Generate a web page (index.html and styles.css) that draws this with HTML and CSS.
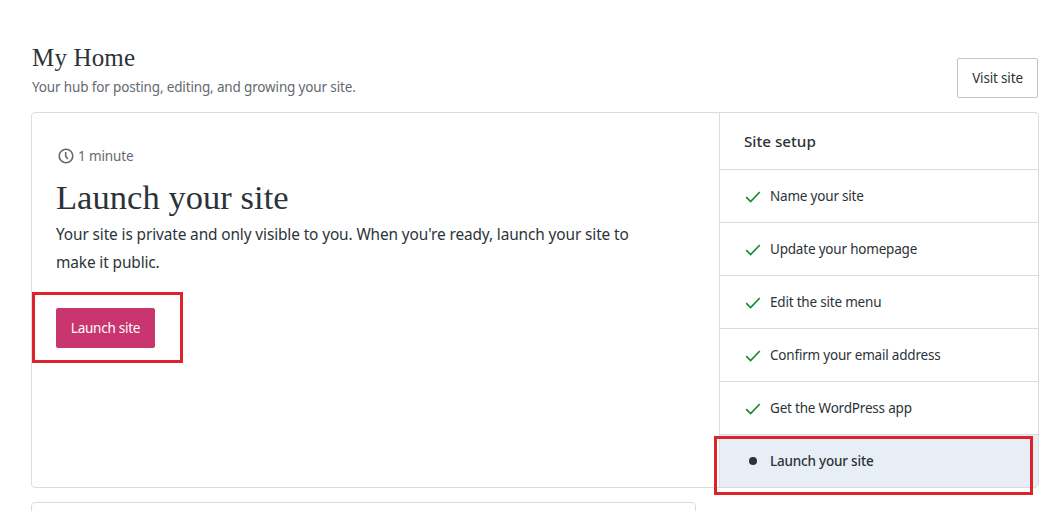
FILE: index.html
```html
<!DOCTYPE html>
<html lang="en">
<head>
<meta charset="utf-8">
<title>My Home</title>
<link rel="stylesheet" href="styles.css">
</head>
<body>
<main class="page">
  <header class="header">
    <div class="heading">
      <h1 class="title"><span>My Home</span></h1>
      <p class="subtitle"><span>Your hub for posting, editing, and growing your site.</span></p>
    </div>
    <button class="button visit"><span>Visit site</span></button>
  </header>
  <section class="card">
    <div class="task">
      <div class="timing">
        <svg class="clock" viewBox="0 0 16 16"><circle cx="8" cy="8" r="6.8"/><path d="M7.7 4.1v4.2l2 2.7"/></svg>
        <span>1 minute</span>
      </div>
      <h2 class="task-title"><span>Launch your site</span></h2>
      <p class="description"><span>Your site is private and only visible to you. When you're ready, launch your site to</span><br><span>make it public.</span></p>
      <div class="action"><button class="button primary"><span>Launch site</span></button><div class="highlight highlight-button"></div></div>
    </div>
    <aside class="setup">
      <h3 class="setup-title"><span>Site setup</span></h3>
      <ul class="steps">
        <li class="step"><svg class="check" viewBox="0 0 16 14"><path d="M1.2 7.2l4.4 4.3L14.8 2"/></svg><span>Name your site</span></li>
        <li class="step"><svg class="check" viewBox="0 0 16 14"><path d="M1.2 7.2l4.4 4.3L14.8 2"/></svg><span>Update your homepage</span></li>
        <li class="step"><svg class="check" viewBox="0 0 16 14"><path d="M1.2 7.2l4.4 4.3L14.8 2"/></svg><span>Edit the site menu</span></li>
        <li class="step"><svg class="check" viewBox="0 0 16 14"><path d="M1.2 7.2l4.4 4.3L14.8 2"/></svg><span>Confirm your email address</span></li>
        <li class="step"><svg class="check" viewBox="0 0 16 14"><path d="M1.2 7.2l4.4 4.3L14.8 2"/></svg><span>Get the WordPress app</span></li>
        <li class="step current"><i class="dot"></i><span>Launch your site</span><div class="highlight highlight-step"></div></li>
      </ul>
    </aside>
  </section>
  <section class="next-card"></section>
</main>
</body>
</html>
```
FILE: styles.css
```css
* { box-sizing: border-box; }
body { margin: 0; background: #fff; overflow: hidden; color: #2c3338; font: 14px/20px "Noto Sans", "Open Sans", sans-serif; }
h1, h2, h3, p, ul { margin: 0; padding: 0; font-weight: 400; }
.page { width: 1059px; height: 511px; padding: 42px 20px 0 31px; overflow: hidden; }
.header { display: flex; justify-content: space-between; height: 70px; padding-left: 1px; }
.title { font: 25px/32px "Liberation Serif", serif; letter-spacing: .15px; }
.subtitle { margin-top: 3px; color: #646970; font-size: 13.5px; letter-spacing: -.15px; }
.button { height: 40px; padding: 0; border: 1px solid #c3c4c7; border-radius: 2px; background: #fff; color: #2c3338; font: 13.5px/20px "Noto Sans", sans-serif; letter-spacing: -.17px; white-space: nowrap; }
.visit { width: 81px; margin: 16px 1px 0 0; }
.card { display: flex; width: 1008px; height: 376px; border: 1px solid #dcdcde; border-radius: 4px; }
.task { width: 687px; padding: 32px 24px 0; }
.timing { display: flex; align-items: center; gap: 4px; height: 20px; padding: 1px 0 0 2px; color: #646970; font-size: 13.5px; letter-spacing: -.14px; }
.clock { width: 16px; height: 16px; margin-top: 1px; fill: none; stroke: #646970; stroke-width: 1.6; }
.task-title { margin-top: 11px; font: 34.5px/42px "Liberation Serif", serif; letter-spacing: .05px; }
.description { margin-top: 3px; font-size: 15.4px; line-height: 28px; letter-spacing: -.115px; white-space: nowrap; }
.action { position: relative; width: 99px; margin-top: 31px; }
.primary { width: 99px; border-color: #c9356e; background: #c9356e; color: #fff; letter-spacing: -.25px; }
.highlight { position: absolute; border: 3px solid #dc232a; }
.highlight-button { left: -24px; top: -16px; width: 151px; height: 71px; }
.setup { width: 319px; border-left: 1px solid #dcdcde; }
.setup-title { height: 56px; padding: 17px 24px 0; font-size: 15.2px; font-weight: 500; line-height: 22px; }
.steps { list-style: none; }
.step { display: flex; align-items: center; height: 53px; padding: 0 0 0 25px; gap: 9px; border-top: 1px solid #dcdcde; font-size: 13.5px; letter-spacing: -.2px; }
.check { width: 16px; height: 14px; margin-top: 2px; fill: none; stroke: #178a33; stroke-width: 1.7; }
.current { position: relative; background: #e7eef5; font-weight: 500; }
.dot { width: 8px; height: 8px; margin: 0 4px; border-radius: 50%; background: #2c3338; }
.highlight-step { left: -6px; top: 1px; width: 319px; height: 59px; }
.next-card { width: 665px; height: 20px; margin-top: 14px; border: 1px solid #dcdcde; border-radius: 4px; }
```
